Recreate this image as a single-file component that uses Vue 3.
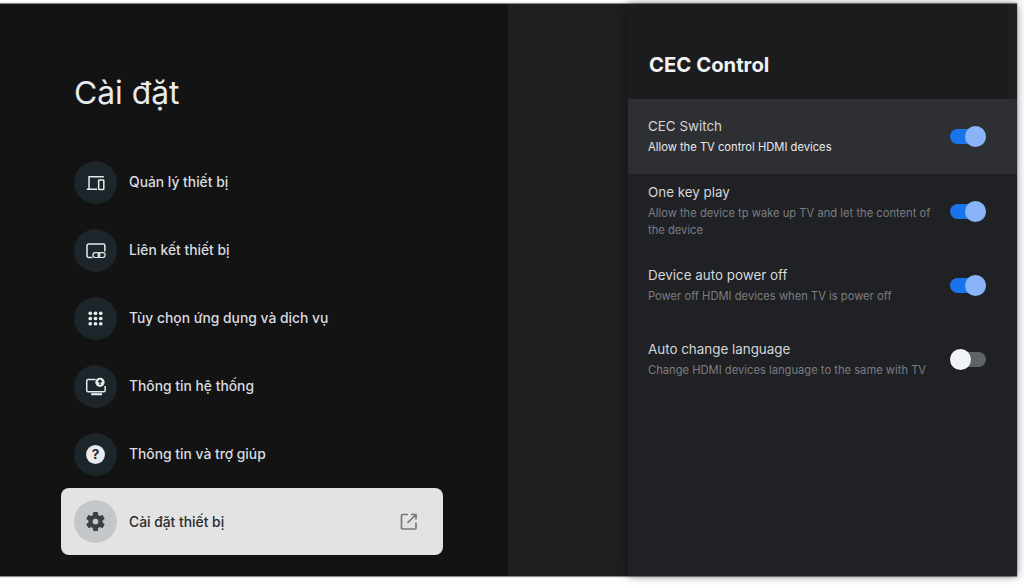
<script setup>
const menu = [
  { label: 'Quản lý thiết bị', icon: 'devices' },
  { label: 'Liên kết thiết bị', icon: 'link' },
  { label: 'Tùy chọn ứng dụng và dịch vụ', icon: 'apps' },
  { label: 'Thông tin hệ thống', icon: 'system' },
  { label: 'Thông tin và trợ giúp', icon: 'help' },
  { label: 'Cài đặt thiết bị', icon: 'gear', active: true }
]
const settings = [
  { title: 'CEC Switch', desc: 'Allow the TV control HDMI devices', on: true, focus: true },
  { title: 'One key play', desc: 'Allow the device tp wake up TV and let the content of the device', on: true },
  { title: 'Device auto power off', desc: 'Power off HDMI devices when TV is power off', on: true },
  { title: 'Auto change language', desc: 'Change HDMI devices language to the same with TV', on: false }
]
const dots = [6, 12, 18].flatMap((y) => [6, 12, 18].map((x) => ({ x, y })))
</script>

<template>
  <div class="page">
    <div class="screen">
      <section class="left">
        <h1 class="title">Cài đặt</h1>
        <ul class="menu">
          <li v-for="item in menu" :key="item.label" class="item" :class="{ active: item.active }">
            <span class="badge">
              <svg v-if="item.icon === 'devices'" viewBox="0 0 24 24" class="ic">
                <path d="M3.800 5.500H21.500M4.600 5.500V19.500M2 19.800H13.800" class="line" />
                <rect x="15.600" y="9.200" width="5.900" height="10.800" rx="0.800" class="line" />
              </svg>
              <svg v-else-if="item.icon === 'link'" viewBox="0 0 24 24" class="ic">
                <path d="M8.500 20H4a1.700 1.700 0 0 1-1.700-1.700V6.300A1.700 1.700 0 0 1 4 4.600h17a1.700 1.700 0 0 1 1.700 1.700V13" class="line" />
                <rect x="9" y="14.500" width="8" height="5.500" rx="2.750" class="line thin" />
                <rect x="15" y="14.500" width="8" height="5.500" rx="2.750" class="line thin" />
              </svg>
              <svg v-else-if="item.icon === 'apps'" viewBox="0 0 24 24" class="ic">
                <circle v-for="d in dots" :key="`${d.x}-${d.y}`" :cx="d.x" :cy="d.y" r="2.100" fill="currentColor" />
              </svg>
              <svg v-else-if="item.icon === 'system'" viewBox="0 0 24 24" class="ic">
                <path d="M12 4H3.500A1.500 1.500 0 0 0 2 5.500v11A1.500 1.500 0 0 0 3.500 18h18a1.500 1.500 0 0 0 1.500-1.500V11.500" class="line" />
                <path d="M7 20.800h12.400" class="line wide" />
                <circle cx="17.100" cy="7.200" r="5.300" fill="currentColor" />
                <path d="M17.100 10.200V5M14.900 7l2.200-2.200L19.300 7" class="cut" />
              </svg>
              <svg v-else-if="item.icon === 'help'" viewBox="0 0 24 24" class="ic">
                <circle cx="12" cy="12" r="10.800" fill="currentColor" />
                <text x="12" y="17.300" text-anchor="middle" class="qmark">?</text>
              </svg>
              <svg v-else viewBox="0 0 24 24" class="ic">
                <path transform="translate(12 12) scale(1.080) translate(-12 -12)" fill="currentColor" d="M19.430 12.980c.04-.32.070-.64.070-.98s-.03-.66-.07-.98l2.110-1.650a.5.500 0 0 0 .12-.64l-2-3.460a.5.500 0 0 0-.61-.22l-2.490 1a7.300 7.300 0 0 0-1.690-.98l-.38-2.650A.49.490 0 0 0 14 2h-4a.49.490 0 0 0-.49.420l-.38 2.650c-.61.250-1.170.590-1.690.98l-2.490-1a.49.490 0 0 0-.61.220l-2 3.460a.49.490 0 0 0 .12.640l2.110 1.650c-.04.320-.07.650-.07.980s.03.660.07.980l-2.110 1.650a.5.500 0 0 0-.12.640l2 3.460c.12.220.39.300.61.220l2.490-1c.52.400 1.080.730 1.690.980l.38 2.650c.03.240.24.420.49.420h4c.25 0 .46-.18.490-.42l.38-2.650c.61-.25 1.170-.59 1.690-.98l2.490 1c.23.090.49 0 .61-.22l2-3.460a.5.500 0 0 0-.12-.64l-2.110-1.650zM12 15a3 3 0 1 1 0-6 3 3 0 0 1 0 6z" />
              </svg>
            </span>
            <span class="label">{{ item.label }}</span>
            <svg v-if="item.active" viewBox="0 0 18 18" class="external">
              <path d="M8 1.500H2.500a1 1 0 0 0-1 1V15a1 1 0 0 0 1 1H15a1 1 0 0 0 1-1V9.500M11 1.500h5V6.500M16 1.500 7.500 10" />
            </svg>
          </li>
        </ul>
      </section>
      <div class="gap"></div>
      <aside class="panel">
        <header class="panel-head">
          <h2>CEC Control</h2>
        </header>
        <div
          v-for="row in settings"
          :key="row.title"
          class="row"
          :class="{ focus: row.focus }"
        >
          <div class="text">
            <div class="row-title">{{ row.title }}</div>
            <div class="row-desc">{{ row.desc }}</div>
          </div>
          <span class="toggle" :class="{ on: row.on }"><span class="thumb"></span></span>
        </div>
      </aside>
    </div>
  </div>
</template>

<style>
html, body { margin: 0; background: #fff; overflow: hidden; }
</style>

<style scoped>
.page {
  width: 1024px;
  height: 585px;
  padding-top: 4px;
  box-sizing: border-box;
  background: #fff;
  font-family: Inter, "Liberation Sans", sans-serif;
}
.screen {
  display: flex;
  width: 1017px;
  height: 572px;
  box-shadow: 0 -1px 1px #8a8a8a, 0 1px 1px #8a8a8a;
}
.left {
  width: 508px;
  flex: none;
  background: #131313;
  box-sizing: border-box;
  padding: 69px 65px 0 61px;
}
.title {
  margin: 0 0 35px 13px;
  font-size: 31.800px;
  line-height: 40px;
  font-weight: 400;
  color: #e8eaed;
}
.menu { list-style: none; margin: 0; padding: 0; }
.item {
  display: flex;
  align-items: center;
  height: 68px;
  padding: 0 24px 0 13px;
  border-radius: 8px;
  color: #dadce0;
}
.item.active { background: #e3e3e3; color: #2a2c2f; height: 67px; }
.badge {
  width: 43px;
  height: 43px;
  border-radius: 50%;
  background: #1c2529;
  display: flex;
  align-items: center;
  justify-content: center;
  flex: none;
  color: #e8eaed;
}
.active .badge { background: #c4c7c9; color: #3c4043; }
.ic { width: 21px; height: 21px; display: block; }
.line { fill: none; stroke: currentColor; stroke-width: 1.700; }
.thin { stroke-width: 1.400; }
.wide { stroke-width: 2.400; }
.cut { fill: none; stroke: #1c2529; stroke-width: 1.500; }
.qmark { font-size: 15.500px; font-weight: 700; fill: #1c2529; font-family: Inter, sans-serif; }
.label {
  margin-left: 12px;
  flex: 1;
  font-size: 13.850px;
  font-weight: 500;
  white-space: nowrap;
}
.external {
  width: 18px;
  height: 18px;
  margin-right: 1px;
  fill: none;
  stroke: #77797c;
  stroke-width: 1.700;
}
.gap { width: 120px; flex: none; background: #1f1f1f; }
.panel {
  width: 389px;
  flex: none;
  background: #202124;
  box-shadow: 0 0 9px rgba(0, 0, 0, 0.450);
  position: relative;
}
.panel-head {
  height: 95px;
  box-sizing: border-box;
  padding: 48px 21px 0;
  background: linear-gradient(to right, #1b1c1e 381px, #1f2023 381px);
}
.panel-head h2 {
  margin: 0;
  font-size: 20.300px;
  line-height: 26px;
  font-weight: 700;
  color: #f1f3f4;
}
.row {
  height: 74px;
  display: flex;
  align-items: center;
  justify-content: space-between;
  box-sizing: border-box;
  padding: 0 31px 0 20px;
}
.row.focus { background: #2e2f33; height: 75px; }
.text { width: 290px; padding-bottom: 1px; }
.row-title {
  font-size: 13.400px;
  line-height: 20px;
  color: #d5d7da;
  margin-bottom: 3px;
}
.row-desc {
  font-size: 11.200px;
  line-height: 17px;
  color: #7b7d81;
}
.focus .row-desc { color: #e8eaed; }
.toggle {
  position: relative;
  display: block;
  width: 36px;
  height: 15px;
  border-radius: 8px;
  background: #5f6368;
}
.toggle.on { background: #1a73e8; }
.thumb {
  position: absolute;
  top: -3px;
  left: 0;
  width: 21px;
  height: 21px;
  border-radius: 50%;
  background: #f1f3f4;
}
.on .thumb { left: 15px; background: #8ab4f8; }
</style>
